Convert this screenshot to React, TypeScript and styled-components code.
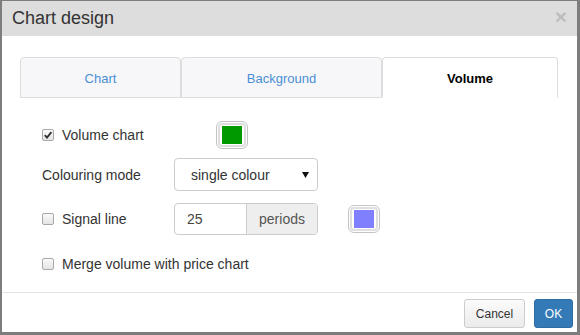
import React from 'react';
import styled, {createGlobalStyle} from 'styled-components';

const GlobalStyle = createGlobalStyle`
    html, body {
        margin: 0;
        padding: 0;
        background: #fff;
    }
    body {
        font-family: "Liberation Sans", Arial, sans-serif;
        color: #333;
    }
`

const tabs = [
    {title: 'Chart', width: 161},
    {title: 'Background', width: 201},
    {title: 'Volume', width: 176, active: true},
];

const Check = ({checked}: { checked?: boolean }) => (
    <CheckBox>
        {checked && (
            <svg width="10" height="10" viewBox="0 0 10 10">
                <path d="M1.8 5.2 L4 7.6 L8.4 2.2" fill="none" stroke="#333" strokeWidth="1.9"/>
            </svg>
        )}
    </CheckBox>
);

const Swatch = ({color}: { color: string }) => (
    <SwatchOuter>
        <SwatchInner>
            <SwatchColor $color={color}/>
        </SwatchInner>
    </SwatchOuter>
);

export default function App() {
    return (
        <>
            <GlobalStyle/>
            <Dialog>
                <Header>
                    <Title>Chart design</Title>
                    <Close>×</Close>
                </Header>
                <Body>
                    <Tabs>
                        {tabs.map(t => (
                            <Tab key={t.title} $width={t.width} $active={t.active}>{t.title}</Tab>
                        ))}
                    </Tabs>
                    <Form>
                        <Row $height={28} $top={23}>
                            <Label $width={174}>
                                <Check checked/>
                                Volume chart
                            </Label>
                            <Swatch color="#009900"/>
                        </Row>
                        <Row $height={33} $top={9}>
                            <Label $width={132}>Colouring mode</Label>
                            <Select>
                                single colour
                                <svg width="7" height="6" viewBox="0 0 7 6">
                                    <path d="M0 0 H7 L3.5 6 Z" fill="#111"/>
                                </svg>
                            </Select>
                        </Row>
                        <Row $height={32} $top={12}>
                            <Label $width={132}>
                                <Check/>
                                Signal line
                            </Label>
                            <InputGroup>
                                <NumberField>25</NumberField>
                                <Addon>periods</Addon>
                            </InputGroup>
                            <SwatchSpacer/>
                            <Swatch color="#8080ff"/>
                        </Row>
                        <Row $height={20} $top={19}>
                            <Label>
                                <Check/>
                                Merge volume with price chart
                            </Label>
                        </Row>
                    </Form>
                </Body>
                <Footer>
                    <Button $width={61}>Cancel</Button>
                    <Button $width={39} $primary>OK</Button>
                </Footer>
            </Dialog>
        </>
    );
}

const Dialog = styled.div`
    width: 580px;
    height: 335px;
    box-sizing: border-box;
    border-style: solid;
    border-color: #7d7d7d;
    border-width: 1px 3px 3px 2px;
    display: flex;
    flex-direction: column;
    background: #fff;
`

const Header = styled.div`
    height: 35px;
    flex-shrink: 0;
    background: #dddddd;
    display: flex;
    align-items: center;
    justify-content: space-between;
    padding: 0 10px 0 10px;
`

const Title = styled.div`
    font-size: 18px;
    color: #333;
`

const Close = styled.div`
    font-size: 21px;
    font-weight: 700;
    color: #bdbdbd;
    line-height: 1;
    margin-top: -4px;
`

const Body = styled.div`
    flex: 1;
    padding: 21px 18px 0 18px;
`

const Tabs = styled.div`
    display: flex;
    height: 41px;
`

const Tab = styled.div<{ $width: number; $active?: boolean }>`
    width: ${p => p.$width}px;
    box-sizing: border-box;
    border: 1px solid #dddddd;
    border-bottom-color: ${p => p.$active ? 'transparent' : '#dddddd'};
    border-radius: 4px 4px 0 0;
    background: ${p => p.$active ? '#fff' : '#f7f7f9'};
    color: ${p => p.$active ? '#000' : '#4a8fd4'};
    font-weight: ${p => p.$active ? 700 : 400};
    font-size: 13px;
    display: flex;
    align-items: center;
    justify-content: center;
    padding-top: 1px;
`

const Form = styled.div`
    padding-left: 22px;
    display: flex;
    flex-direction: column;
`

const Row = styled.div<{ $height: number; $top: number }>`
    height: ${p => p.$height}px;
    margin-top: ${p => p.$top}px;
    display: flex;
    align-items: center;
`

const Label = styled.div<{ $width?: number }>`
    width: ${p => p.$width ? `${p.$width}px` : 'auto'};
    flex-shrink: 0;
    display: flex;
    align-items: center;
    font-size: 14px;
    color: #333;
`

const CheckBox = styled.span`
    width: 12px;
    height: 12px;
    box-sizing: border-box;
    border: 1px solid #a9a9a9;
    border-radius: 2px;
    background: linear-gradient(#fafafa, #e4e4e4);
    margin-right: 8px;
    display: flex;
    align-items: center;
    justify-content: center;
`

const SwatchOuter = styled.div`
    width: 32px;
    height: 28px;
    box-sizing: border-box;
    border: 1px solid #c4c4c4;
    border-radius: 6px;
    padding: 1px;
    background: #fff;
`

const SwatchInner = styled.div`
    width: 100%;
    height: 100%;
    box-sizing: border-box;
    border: 2px solid #dedede;
    border-radius: 4px;
    padding: 1px 2px;
    background: #fff;
`

const SwatchColor = styled.div<{ $color: string }>`
    width: 100%;
    height: 100%;
    background: ${p => p.$color};
`

const SwatchSpacer = styled.div`
    width: 30px;
`

const Select = styled.div`
    width: 144px;
    height: 33px;
    box-sizing: border-box;
    border: 1px solid #cccccc;
    border-radius: 4px;
    display: flex;
    align-items: center;
    justify-content: space-between;
    padding: 0 8px 0 16px;
    font-size: 14px;
    color: #333;
`

const InputGroup = styled.div`
    display: flex;
    height: 32px;
    width: 144px;
    box-sizing: border-box;
    border: 1px solid #cccccc;
    border-radius: 4px;
    overflow: hidden;
    font-size: 14px;
    color: #444;
`

const NumberField = styled.div`
    width: 72px;
    box-sizing: border-box;
    border-right: 1px solid #cccccc;
    display: flex;
    align-items: center;
    padding-left: 12px;
`

const Addon = styled.div`
    flex: 1;
    background: #eeeeee;
    display: flex;
    align-items: center;
    justify-content: center;
    color: #555;
`

const Footer = styled.div`
    height: 40px;
    flex-shrink: 0;
    box-sizing: border-box;
    border-top: 1px solid #e5e5e5;
    display: flex;
    justify-content: flex-end;
    align-items: flex-start;
    gap: 9px;
    padding: 6px 4px 0 0;
`

const Button = styled.div<{ $primary?: boolean; $width: number }>`
    width: ${p => p.$width}px;
    height: 29px;
    box-sizing: border-box;
    border: 1px solid ${p => p.$primary ? '#2e6da4' : '#cccccc'};
    border-radius: 3px;
    background: ${p => p.$primary ? '#337ab7' : 'linear-gradient(#fbfbfb, #ebebeb)'};
    color: ${p => p.$primary ? '#fff' : '#333'};
    font-size: 12px;
    display: flex;
    align-items: center;
    justify-content: center;
`
